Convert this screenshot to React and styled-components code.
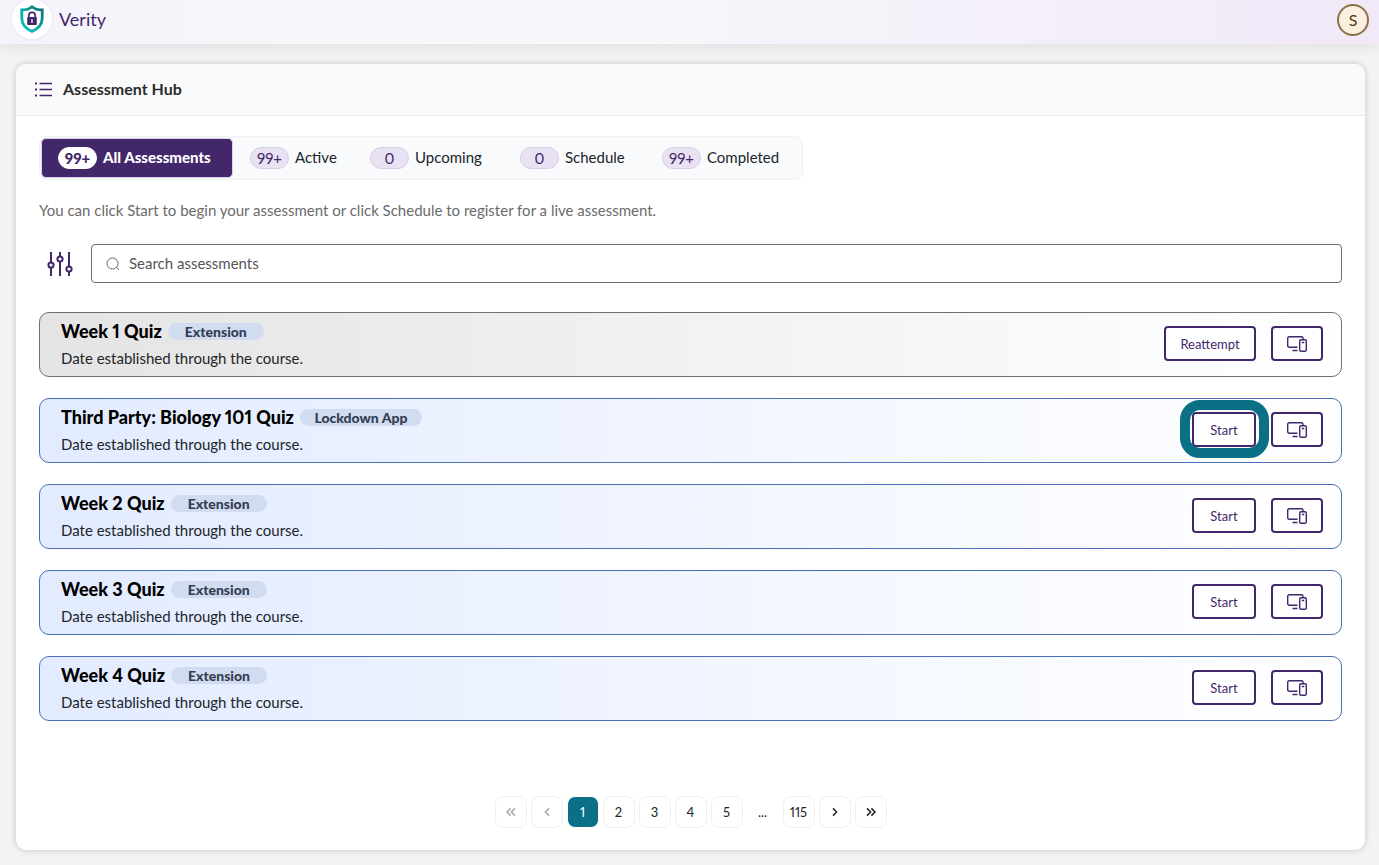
import React from 'react';
import styled, { createGlobalStyle, css } from 'styled-components';

const purple = '#43276b';
const teal = '#0b7085';

const GlobalStyle = createGlobalStyle`
  *, *::before, *::after { box-sizing: border-box; }
  body {
    margin: 0;
    background: #f3f3f3;
    color: #212529;
    font-family: Lato, "Liberation Sans", sans-serif;
    font-size: 15px;
    line-height: 20px;
    font-variant-numeric: proportional-nums;
  }
  button, input { font: inherit; color: inherit; }
  h1, h2, p, ul { margin: 0; padding: 0; }
`;

const Page = styled.div`
  min-height: 100vh;
  display: flex;
  flex-direction: column;
`;

const TopBar = styled.header`
  display: flex;
  align-items: center;
  justify-content: space-between;
  height: 44px;
  padding: 0 10px 4px 12px;
  background: linear-gradient(90deg, #f5f4fa 0%, #f7f7fb 45%, #f1e8f8 100%);
  box-shadow: 0 2px 14px rgba(0, 0, 0, 0.09);
`;

const Brand = styled.a`
  display: flex;
  align-items: center;
  gap: 7px;
  padding-bottom: 2px;
  color: ${purple};
  font-size: 18px;
  text-decoration: none;
`;

const LogoDisc = styled.span`
  display: grid;
  place-items: center;
  width: 40px;
  height: 40px;
  border-radius: 50%;
  background: #fff;
  box-shadow: 0 0 3px rgba(67, 39, 107, 0.12);
`;

const Avatar = styled.button`
  width: 32px;
  height: 32px;
  padding: 0;
  border: 2px solid #8b7245;
  border-radius: 50%;
  background: #fbf0e0;
  color: #4e3c1c;
  font-size: 16px;
`;

const Card = styled.main`
  flex: 1;
  display: flex;
  flex-direction: column;
  margin: 20px 14px 15px 16px;
  border-radius: 10px;
  background: #fff;
  box-shadow: 0 0 6px rgba(0, 0, 0, 0.2);
`;

const CardHeader = styled.div`
  display: flex;
  align-items: center;
  gap: 10px;
  height: 52px;
  padding: 0 18px 2px;
  border-bottom: 1px solid #ebebeb;
  border-radius: 10px 10px 0 0;
  background: #fafafa;
`;

const CardTitle = styled.h1`
  font-size: 16px;
  line-height: 20px;
  font-weight: 700;
  color: #2b2b2e;
`;

const CardBody = styled.div`
  flex: 1;
  display: flex;
  flex-direction: column;
  padding: 20px 23px 22px;
`;

const Tabs = styled.div`
  display: grid;
  grid-template-columns: 192px 120px 150px 142px 156px;
  align-self: flex-start;
  height: 44px;
  padding: 1px;
  border: 1px solid #eef2f4;
  border-radius: 8px;
  background: #f8fafc;
`;

const Tab = styled.button`
  display: flex;
  align-items: center;
  gap: 6px;
  padding: 0 12px 0 16px;
  border: 1px solid transparent;
  border-radius: 5px;
  background: none;
  white-space: nowrap;
  ${({ $active }) => $active && css`
    border-color: #d9cfe8;
    background: ${purple};
    color: #fff;
    font-weight: 900;
  `}
`;

const TabLabel = styled.span`
  padding-bottom: 2px;
`;

const Count = styled.span`
  flex: none;
  width: 39px;
  height: 22px;
  border: 1px solid ${({ $active }) => ($active ? '#fff' : '#dacfe9')};
  border-radius: 11px;
  background: ${({ $active }) => ($active ? '#fff' : '#e9e2f2')};
  color: ${purple};
  line-height: 20px;
  text-align: center;
`;

const Hint = styled.p`
  margin-top: 20px;
  color: #6b6b6b;
`;

const SearchRow = styled.div`
  display: flex;
  align-items: center;
  gap: 10px;
  margin-top: 24px;
`;

const FilterButton = styled.button`
  display: grid;
  place-items: center;
  width: 42px;
  height: 39px;
  padding: 0;
  border: 0;
  background: none;
  color: ${purple};
`;

const SearchField = styled.label`
  flex: 1;
  display: flex;
  align-items: center;
  gap: 9px;
  height: 39px;
  padding: 0 14px;
  border: 1px solid #6d6d70;
  border-radius: 4px;
`;

const SearchInput = styled.input`
  flex: 1;
  padding: 0 0 2px;
  border: 0;
  outline: 0;
  background: none;
  &::placeholder { color: #55555a; opacity: 1; }
`;

const List = styled.ul`
  display: flex;
  flex-direction: column;
  gap: 21px;
  margin-top: 29px;
  list-style: none;
`;

const Row = styled.li`
  display: flex;
  align-items: center;
  justify-content: space-between;
  height: 65px;
  padding: 0 18px 2px 21px;
  border: 1px solid ${({ $muted }) => ($muted ? '#6f6f6f' : '#4a6db5')};
  border-radius: 10px;
  background: linear-gradient(90deg, ${({ $muted }) => ($muted ? '#e4e4e4' : '#e2ebff')} 0%, #fff 100%);
`;

const RowTitle = styled.div`
  display: flex;
  align-items: center;
  gap: 6px;
`;

const QuizName = styled.h2`
  color: #000;
  font-size: 18px;
  line-height: 24px;
  font-weight: 900;
`;

const Tag = styled.span`
  width: ${({ $wide }) => ($wide ? 122 : 96)}px;
  border-radius: 9px;
  background: #d1dcf1;
  color: #343e52;
  font-size: 14px;
  line-height: 17px;
  font-weight: 900;
  text-align: center;
`;

const RowNote = styled.p`
  margin-top: 5px;
`;

const Actions = styled.div`
  display: flex;
  gap: 15px;
`;

const ActionButton = styled.button`
  position: relative;
  display: grid;
  place-items: center;
  min-width: ${({ $size }) => ({ icon: 52, short: 64, long: 92 })[$size]}px;
  height: 35px;
  padding: 0;
  border: 2px solid ${purple};
  border-radius: 4px;
  background: #fff;
  color: ${purple};
  font-size: 13px;
  ${({ $highlight }) => $highlight && css`
    &::after {
      content: '';
      position: absolute;
      inset: -14px -15px -13px -14px;
      border: 10px solid ${teal};
      border-radius: 20px;
      pointer-events: none;
    }
  `}
`;

const Pagination = styled.nav`
  display: flex;
  justify-content: center;
  gap: 4px;
  margin-top: auto;
`;

const PageButton = styled.button`
  display: grid;
  place-items: center;
  width: 32px;
  height: 32px;
  padding: 0;
  border: 1px solid #efeff0;
  border-radius: 8px;
  background: #fff;
  font-size: 13px;
  &:disabled { color: #a8a8a8; }
  ${({ $current }) => $current && css`
    border-color: #fff;
    background: ${teal};
    color: #fff;
  `}
`;

const Ellipsis = styled.span`
  width: 32px;
  line-height: 32px;
  font-size: 13px;
  text-align: center;
`;

const ShieldIcon = () => (
  <svg width="26" height="30" viewBox="0 0 26 30" fill="none" aria-hidden="true">
    <defs>
      <linearGradient id="shield" x1="0" y1="1" x2="1" y2="0">
        <stop offset="0" stopColor="#0cc5c4" />
        <stop offset="0.5" stopColor="#0aa3a5" />
        <stop offset="1" stopColor="#0b6a70" />
      </linearGradient>
    </defs>
    <path d="M13 2.8 C10.5 5 7 6 2.8 6 V14 C2.8 20.5 6.8 24.8 13 27.4 C19.2 24.8 23.2 20.5 23.2 14 V6 C19 6 15.5 5 13 2.8Z" stroke="url(#shield)" strokeWidth="2.8" />
    <path d="M9.8 14 V11.6 a3.2 3.2 0 0 1 6.4 0 V14" stroke={purple} strokeWidth="1.6" />
    <rect x="8.2" y="13" width="9.6" height="8" rx="0.8" fill={purple} />
    <path d="M13 15.8 v2.4" stroke="#fff" strokeWidth="1.4" strokeLinecap="round" />
  </svg>
);

const ListIcon = () => (
  <svg width="19" height="16" viewBox="0 0 19 16" fill="none" stroke={purple} aria-hidden="true">
    <path d="M5.5 2.5H18M5.5 8.5H18M5.5 14.5H18" strokeWidth="1.3" />
    <path d="M1 2.5h2M1 8.5h2M1 14.5h2" strokeWidth="1.8" />
  </svg>
);

const FilterIcon = () => (
  <svg width="26" height="26" viewBox="0 0 26 26" fill="none" stroke="currentColor" strokeWidth="2" aria-hidden="true">
    <path d="M4 1V11M4 17V25M13 1V5M13 11V25M22 1V15M22 21V25" />
    <circle cx="4" cy="14" r="2.6" />
    <circle cx="13" cy="8" r="2.6" />
    <circle cx="22" cy="18" r="2.6" />
  </svg>
);

const SearchIcon = () => (
  <svg width="14" height="14" viewBox="0 0 14 14" fill="none" stroke="#66666a" aria-hidden="true">
    <circle cx="6.5" cy="6.5" r="5.5" />
    <path d="M10.4 10.4L13 13" />
  </svg>
);

const DevicesIcon = () => (
  <svg width="20" height="16" viewBox="0 0 20 16" fill="none" stroke="currentColor" strokeWidth="1.4" aria-hidden="true">
    <path d="M16 3V2.2A1.5 1.5 0 0 0 14.5 0.7H2.2A1.5 1.5 0 0 0 0.7 2.2v7.6a1.5 1.5 0 0 0 1.5 1.5H10.5" />
    <rect x="12.7" y="3.7" width="6.6" height="11.6" rx="1.4" />
    <path d="M14.8 6.5h2.4M5.5 14.5H10.5" />
  </svg>
);

const Chevron = ({ left, double }) => (
  <svg width="12" height="10" viewBox="0 0 12 10" fill="none" stroke="currentColor" strokeWidth="1.5" aria-hidden="true">
    <g transform={left ? 'matrix(-1 0 0 1 12 0)' : undefined}>
      <path d={double ? 'M2 1.4L5.6 5L2 8.6M6.4 1.4L10 5L6.4 8.6' : 'M4 1.4L7.6 5L4 8.6'} />
    </g>
  </svg>
);

const tabs = [
  ['99+', 'All Assessments'],
  ['99+', 'Active'],
  ['0', 'Upcoming'],
  ['0', 'Schedule'],
  ['99+', 'Completed'],
];

const quizzes = [
  { name: 'Week 1 Quiz', tag: 'Extension', action: 'Reattempt', muted: true },
  { name: 'Third Party: Biology 101 Quiz', tag: 'Lockdown App', action: 'Start', highlight: true },
  { name: 'Week 2 Quiz', tag: 'Extension', action: 'Start' },
  { name: 'Week 3 Quiz', tag: 'Extension', action: 'Start' },
  { name: 'Week 4 Quiz', tag: 'Extension', action: 'Start' },
];

export default function App() {
  return (
    <Page>
      <GlobalStyle />
      <TopBar>
        <Brand href="#">
          <LogoDisc><ShieldIcon /></LogoDisc>
          Verity
        </Brand>
        <Avatar>S</Avatar>
      </TopBar>
      <Card>
        <CardHeader>
          <ListIcon />
          <CardTitle>Assessment Hub</CardTitle>
        </CardHeader>
        <CardBody>
          <Tabs role="tablist">
            {tabs.map(([count, label], i) => (
              <Tab key={label} role="tab" aria-selected={i === 0} $active={i === 0}>
                <Count $active={i === 0}>{count}</Count>
                <TabLabel>{label}</TabLabel>
              </Tab>
            ))}
          </Tabs>
          <Hint>You can click Start to begin your assessment or click Schedule to register for a live assessment.</Hint>
          <SearchRow>
            <FilterButton aria-label="Filters"><FilterIcon /></FilterButton>
            <SearchField>
              <SearchIcon />
              <SearchInput type="text" aria-label="Search assessments" placeholder="Search assessments" />
            </SearchField>
          </SearchRow>
          <List>
            {quizzes.map((quiz) => (
              <Row key={quiz.name} $muted={quiz.muted}>
                <div>
                  <RowTitle>
                    <QuizName>{quiz.name}</QuizName>
                    <Tag $wide={quiz.tag === 'Lockdown App'}>{quiz.tag}</Tag>
                  </RowTitle>
                  <RowNote>Date established through the course.</RowNote>
                </div>
                <Actions>
                  <ActionButton $size={quiz.action === 'Start' ? 'short' : 'long'} $highlight={quiz.highlight}>
                    {quiz.action}
                  </ActionButton>
                  <ActionButton $size="icon" aria-label="Devices"><DevicesIcon /></ActionButton>
                </Actions>
              </Row>
            ))}
          </List>
          <Pagination aria-label="Pages">
            <PageButton disabled aria-label="First page"><Chevron left double /></PageButton>
            <PageButton disabled aria-label="Previous page"><Chevron left /></PageButton>
            <PageButton $current aria-current="page">1</PageButton>
            {[2, 3, 4, 5].map((n) => <PageButton key={n}>{n}</PageButton>)}
            <Ellipsis>...</Ellipsis>
            <PageButton>115</PageButton>
            <PageButton aria-label="Next page"><Chevron /></PageButton>
            <PageButton aria-label="Last page"><Chevron double /></PageButton>
          </Pagination>
        </CardBody>
      </Card>
    </Page>
  );
}
